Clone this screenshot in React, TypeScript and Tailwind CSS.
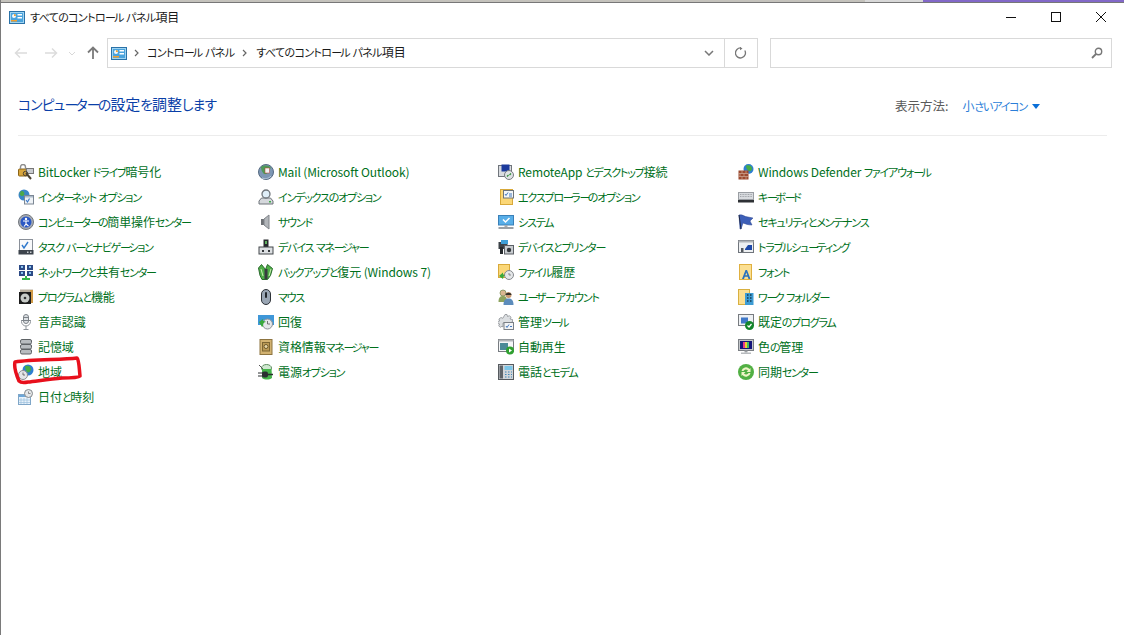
import React from 'react';

const FONT = "font-['Noto_Sans_CJK_JP','Noto_Sans',sans-serif] [font-feature-settings:'palt']";

// The reference font has much narrower kana than kanji, so kana runs get tightened
function Jp({ text, loose = false }: { text: string; loose?: boolean }) {
  const runs = text.match(/[\u3040-\u30fb\u30fd-\u30ff]+|\u30fc+|[^\u3040-\u30ff]+/g) ?? [];
  return (
    <>
      {runs.map((run, i) => {
        if (run[0] === '\u30fc') return <span key={i} className={loose ? 'text-[0.92em] tracking-[-0.18em]' : 'text-[0.92em] tracking-[-0.24em]'}>{run}</span>;
        if (/^[\u3040-\u30ff]/.test(run)) return <span key={i} className={loose ? 'text-[0.92em] tracking-[-0.06em]' : 'text-[0.92em] tracking-[-0.11em]'}>{run}</span>;
        return <span key={i} className="tracking-[-0.01em]">{run}</span>;
      })}
    </>
  );
}

function Svg({ children }: { children: React.ReactNode }) {
  return (
    <svg viewBox="0 0 16 16" className="h-4 w-4 shrink-0">
      {children}
    </svg>
  );
}

// control panel icon used in the title bar and address bar
function PanelIcon() {
  return (
    <svg viewBox="0 0 16 13" className="h-[13px] w-4 shrink-0">
      <rect x="0.5" y="0.5" width="15" height="12" fill="#9fd4f2" stroke="#2a72a8" />
      <rect x="2" y="2" width="12" height="9" fill="#4aa3dc" />
      <circle cx="5" cy="5" r="2" fill="#f4f8fb" />
      <path d="M5 5V3a2 2 0 0 1 2 2z" fill="#f0a030" />
      <rect x="8.5" y="3" width="4.5" height="1.5" fill="#fff" />
      <rect x="8.5" y="6" width="4.5" height="1.5" fill="#fff" />
      <rect x="2" y="9" width="6" height="1.5" fill="#f0a030" />
    </svg>
  );
}

const Clock = ({ x = 10, y = 11, r = 4 }: { x?: number; y?: number; r?: number }) => (
  <g>
    <circle cx={x} cy={y} r={r} fill="#e4e6e8" stroke="#85898d" />
    <path d={`M${x} ${y - 2}v2h2`} fill="none" stroke="#666" strokeWidth="0.7" />
  </g>
);

const icons: Record<string, React.ReactNode> = {
  bitlocker: (
    <>
      <rect x="0.5" y="5" width="9" height="7" rx="1" fill="#d9a63c" stroke="#8a6418" />
      <path d="M2.500 5V3a2.500 2.500 0 0 1 5 0v2" fill="none" stroke="#8d8d8d" strokeWidth="1.400" />
      <rect x="8.500" y="4.500" width="7" height="5" fill="#c9ccd0" stroke="#777" />
      <path d="M8 9l5 6" stroke="#4c4230" strokeWidth="2" />
      <circle cx="7.500" cy="9.500" r="2.200" fill="none" stroke="#4c4230" />
    </>
  ),
  internet: (
    <>
      <circle cx="6" cy="6" r="5.500" fill="#3a86c8" />
      <path d="M3 2c3 0 4 2 3 4S2 7 1.500 5z" fill="#4ca84a" />
      <rect x="6.500" y="6.500" width="9" height="8.500" fill="#eef2f6" stroke="#7c8794" />
      <rect x="7" y="7" width="8" height="1.500" fill="#a9b8c8" />
      <path d="M8 11l1.500 2 2-3.500" fill="none" stroke="#3978c8" strokeWidth="1.100" />
    </>
  ),
  ease: (
    <>
      <circle cx="8" cy="8" r="7.500" fill="#a7acb4" stroke="#70757c" />
      <circle cx="8" cy="8" r="5.500" fill="#2b58c4" />
      <circle cx="8" cy="5" r="1.200" fill="#fff" />
      <path d="M5 7h6M8 7v3l-2 2.500M8 10l2.500 2" stroke="#fff" strokeWidth="1.100" fill="none" />
    </>
  ),
  taskbar: (
    <>
      <rect x="1.500" y="0.500" width="13" height="11" fill="#f8f9fb" stroke="#8a9099" />
      <path d="M4 6l2 3 4-6" fill="none" stroke="#2f78cc" strokeWidth="1.400" />
      <rect x="0.500" y="11" width="15" height="4.500" fill="#3d444c" />
      <rect x="9" y="12.500" width="1.500" height="1.500" fill="#c8ccd0" />
      <rect x="12" y="12.500" width="1.500" height="1.500" fill="#c8ccd0" />
    </>
  ),
  network: (
    <>
      <rect x="1" y="1" width="6" height="5" fill="#2c4a86" />
      <rect x="9" y="1" width="6" height="5" fill="#2c4a86" />
      <rect x="1" y="7" width="6" height="5" fill="#2c4a86" />
      <rect x="9" y="7" width="6" height="5" fill="#2c4a86" />
      <rect x="3" y="2" width="2" height="2" fill="#8ac4ee" />
      <rect x="11" y="2" width="2" height="2" fill="#8ac4ee" />
      <rect x="3" y="8" width="2" height="2" fill="#8ac4ee" />
      <rect x="11" y="8" width="2" height="2" fill="#8ac4ee" />
      <path d="M7 12h2v2h3v2H4v-2h3z" fill="#33b34a" />
    </>
  ),
  programs: (
    <>
      <rect x="2" y="0.500" width="13" height="3" fill="#b9b0a0" />
      <rect x="12" y="1" width="3" height="13" fill="#d09a48" />
      <rect x="1" y="3" width="12" height="12" fill="#1c1c1c" />
      <circle cx="7" cy="9" r="4.500" fill="#c8ccc8" />
      <circle cx="7" cy="9" r="1.300" fill="#333" />
    </>
  ),
  speech: (
    <>
      <rect x="5.500" y="0.500" width="5" height="9" rx="2.500" fill="#dde1e5" stroke="#7c8288" />
      <path d="M4 6.500h8M5.500 3.500h5" stroke="#7c8288" />
      <path d="M3.500 6v1.500a4.500 4.500 0 0 0 9 0V6M8 12v3M5.500 15.500h5" fill="none" stroke="#8f959b" />
    </>
  ),
  storage: (
    <>
      <rect x="2.500" y="0.500" width="11" height="4.500" rx="1.500" fill="#b8bcc0" stroke="#5e6266" />
      <rect x="2.500" y="5.500" width="11" height="4.500" rx="1.500" fill="#b8bcc0" stroke="#5e6266" />
      <rect x="2.500" y="10.500" width="11" height="4.500" rx="1.500" fill="#b8bcc0" stroke="#5e6266" />
    </>
  ),
  region: (
    <>
      <circle cx="10" cy="6" r="5.500" fill="#2f7fd0" />
      <path d="M7 2c3-1 6 0 6 3s-3 4-4 3-2-4-2-6z" fill="#46ad46" />
      <circle cx="5" cy="11" r="4.500" fill="#e4e6e8" stroke="#8a8e92" />
      <path d="M5 8.500V11h2" fill="none" stroke="#555" strokeWidth="0.800" />
    </>
  ),
  datetime: (
    <>
      <rect x="0.500" y="5.500" width="12" height="10" fill="#e8f2fb" stroke="#7fa6c8" />
      <rect x="1" y="6" width="11" height="2" fill="#6ca6d8" />
      <path d="M3 9v6M6 9v6M9 9v6M1 11h11M1 13.500h11" stroke="#9cc0dd" strokeWidth="0.700" />
      <Clock x={10.500} y={4.500} r={4} />
    </>
  ),
  mail: (
    <>
      <circle cx="8" cy="8" r="7.500" fill="#7d97b4" stroke="#566a82" />
      <path d="M3 3c3-2 8-2 10 1-2 1-2 5-5 6S3 6 3 3z" fill="#4f9a58" />
      <rect x="7" y="4" width="4.500" height="5" fill="#f2f4f6" stroke="#c0392b" strokeWidth="0.500" />
      <path d="M4 14c3 1 6 1 9-2" stroke="#b8cadb" fill="none" />
    </>
  ),
  indexing: (
    <>
      <path d="M1 15v-3l2.500-3h9l2.500 3v3z" fill="#d5d8dc" stroke="#6f747a" />
      <rect x="11" y="12" width="2" height="1.500" fill="#3cae48" />
      <circle cx="8" cy="5" r="4" fill="#dfeef8" stroke="#6f747a" strokeWidth="1.300" />
    </>
  ),
  sound: (
    <>
      <rect x="3" y="5" width="3" height="6" fill="#6d7175" />
      <path d="M6 5l5-4v14l-5-4z" fill="#b2b6ba" stroke="#80848a" />
    </>
  ),
  devmgr: (
    <>
      <rect x="5.500" y="0.500" width="5" height="8" fill="#26292c" />
      <rect x="7" y="2" width="2" height="3" fill="#5fb05f" />
      <rect x="1" y="8" width="14" height="7" fill="#dcdfe2" stroke="#44484c" />
      <rect x="4" y="11" width="2" height="2" fill="#33373a" />
      <rect x="10" y="11" width="2" height="2" fill="#33373a" />
    </>
  ),
  backup: (
    <>
      <path d="M0.500 4l3-3.500 4 5 2-5 5 4-2 7-3 4H4l-2-4z" fill="#4fae48" stroke="#2a6a2e" />
      <rect x="6.500" y="5" width="3" height="10" fill="#373b3f" />
      <path d="M3 5l2 7M13 5l-2 7" stroke="#c8eeb0" />
    </>
  ),
  mouse: (
    <>
      <rect x="3.500" y="0.500" width="9" height="15" rx="4.500" fill="#9aa6b4" stroke="#2e3238" />
      <rect x="7" y="3" width="2" height="6" rx="1" fill="#23272c" />
    </>
  ),
  recovery: (
    <>
      <rect x="0" y="1" width="16" height="10" fill="#3f97d8" />
      <circle cx="9.500" cy="10" r="5" fill="#e4e6e8" stroke="#8d9196" />
      <path d="M9.500 7v3h2.500" fill="none" stroke="#555" strokeWidth="0.800" />
      <path d="M1 8l4-3v2c1 0 2 0 3 1-2 0-3 1-3 4l-1 1z" fill="#3aa83c" />
    </>
  ),
  credential: (
    <>
      <rect x="2" y="0.500" width="12" height="15" fill="#d2b271" stroke="#8d7440" />
      <rect x="4.500" y="3.500" width="7" height="8.500" fill="#bb9a56" stroke="#7d6634" />
      <circle cx="8" cy="7.500" r="2" fill="#e8d6a8" stroke="#6d5828" />
    </>
  ),
  power: (
    <>
      <ellipse cx="8.500" cy="4" rx="5" ry="3.500" fill="#cfe8d0" stroke="#5d8d60" />
      <path d="M4 5h9.500l.5 9c-3 2-7 2-10 0z" fill="#46b44a" />
      <path d="M0 9h5M0 12h5" stroke="#2b2e31" />
      <rect x="4" y="7.500" width="6" height="6" rx="2" fill="#2b2e31" />
      <path d="M10 10.500h5" stroke="#2b2e31" strokeWidth="1.500" />
      <path d="M1 1l4 4" stroke="#555" />
    </>
  ),
  remote: (
    <>
      <rect x="0.500" y="1.500" width="13" height="11" fill="#d9dce0" stroke="#70757c" />
      <rect x="3.500" y="0.500" width="8" height="7" fill="#1c3a9c" />
      <circle cx="11" cy="11" r="4.500" fill="#dfe2e5" stroke="#777b80" />
      <path d="M9 12.500l1.500-1.500M11.500 11L13 9.500" stroke="#2e8f36" strokeWidth="1.200" />
    </>
  ),
  explorer: (
    <>
      <rect x="2.500" y="0.500" width="12" height="15" fill="#fbd777" stroke="#d8a93a" />
      <rect x="5.500" y="1.500" width="10" height="7.500" fill="#f4f6f8" stroke="#6f747a" />
      <path d="M7 5l1 1.500 2-3M11 5h3M11 7h3" fill="none" stroke="#4378bf" />
    </>
  ),
  system: (
    <>
      <rect x="0.500" y="1.500" width="15" height="9.500" fill="#58aee8" stroke="#3a80b8" />
      <path d="M5 5.500l2.500 2.500 4-4" fill="none" stroke="#fff" strokeWidth="1.500" />
      <rect x="6.500" y="11" width="3" height="2" fill="#a8acb0" />
      <rect x="0.500" y="13" width="15" height="2" fill="#9aa0a6" />
    </>
  ),
  printers: (
    <>
      <rect x="0.500" y="3" width="9" height="7" fill="#3c4248" />
      <rect x="3" y="1" width="7" height="4" fill="#3f9fd8" />
      <rect x="2" y="8" width="3" height="7" fill="#262a2e" />
      <rect x="6.500" y="6.500" width="9" height="8.500" fill="#c8ccd0" stroke="#5c6066" />
      <circle cx="11" cy="11" r="2.200" fill="#33373b" />
    </>
  ),
  history: (
    <>
      <rect x="0.500" y="0.500" width="11" height="13" fill="#fbd777" stroke="#d8a93a" />
      <Clock x={11} y={11} r={4.500} />
      <path d="M1 12l4-3.500v2c1 0 1.500.5 2 1-1 0-1.500 1-2 3.500z" fill="#3aa83c" />
    </>
  ),
  users: (
    <>
      <circle cx="5" cy="4" r="3" fill="#d9b690" stroke="#7d8f5a" strokeWidth="0.800" />
      <path d="M0.500 13c0-5 2-6 4.500-6s4 1 4 6z" fill="#8da35e" />
      <circle cx="10.500" cy="6" r="3" fill="#c99a72" />
      <path d="M7.500 6c0-3 6-3 6 0z" fill="#33302c" />
      <path d="M5.500 16c0-5 2-6.500 5-6.500s5 1.500 5 6.500z" fill="#5c8cbc" />
    </>
  ),
  admin: (
    <>
      <path d="M7 0.500h2l.5 2 2-.8 1.500 1.500-1 1.800 2.500.5v2.500l-2 .5V9H5v4l-1-.7-1.800 1-1.500-1.500 1-1.800-2-.5V7.500l2-.5-.8-2L3 3.500l1.800.8z" fill="#dcdfe2" stroke="#8d9196" strokeWidth="0.800" />
      <rect x="6" y="8.500" width="9.500" height="7" fill="#f2f4f6" stroke="#7b8086" />
      <path d="M8 12l1 1.500 2-3M12 12.500h2" fill="none" stroke="#4378bf" />
    </>
  ),
  autoplay: (
    <>
      <rect x="0.500" y="0.500" width="15" height="12" fill="#f4f6f8" stroke="#777b80" />
      <rect x="0.500" y="0.500" width="15" height="2" fill="#b0b4b8" />
      <rect x="2" y="4" width="8" height="7" fill="#4a8a98" />
      <circle cx="12" cy="11.500" r="4" fill="#2fa030" />
      <path d="M11 9.500v4l3-2z" fill="#fff" />
    </>
  ),
  phone: (
    <>
      <rect x="0.500" y="0.500" width="15" height="15" fill="#d2d5d8" stroke="#565a5f" />
      <rect x="1.500" y="1.500" width="3.500" height="13" fill="#5e6368" />
      <rect x="6.500" y="2" width="8" height="4" fill="#7cc6e8" />
      <path d="M7 8h1.500M10 8h1.500M13 8h1M7 10.500h1.500M10 10.500h1.500M13 10.500h1M7 13h1.500M10 13h1.500M13 13h1" stroke="#3f87b8" />
    </>
  ),
  firewall: (
    <>
      <circle cx="10.500" cy="5" r="5" fill="#2f7fd0" />
      <path d="M8 1.500c3-1 6 0 6 3s-3 3-4 2-2-3-2-5z" fill="#46ad46" />
      <rect x="0.500" y="6.500" width="10" height="9" fill="#9c4a30" />
      <path d="M0.500 9.500h10M0.500 12.500h10M4 6.500v3M8 6.500v3M2 9.500v3M6 9.500v3M4 12.500v3M8 12.500v3" stroke="#d8b8a8" strokeWidth="0.600" />
    </>
  ),
  keyboard: (
    <>
      <rect x="0.500" y="3.500" width="15" height="7" fill="#d8dbdf" stroke="#9a9ea3" />
      <path d="M2 5.500h12M2 7.500h12" stroke="#a2a6ab" strokeDasharray="1 0.600" />
      <rect x="0" y="11" width="16" height="2.500" fill="#2e3135" />
    </>
  ),
  security: (
    <>
      <path d="M1 1c4-1 5 2 9 2l5 1-3 3 2 4c-4 0-6-1-9-2L3 15H2z" fill="#3d5fb8" stroke="#2a438a" strokeWidth="0.500" />
      <path d="M1 1l2 14" stroke="#1f2a4a" />
    </>
  ),
  trouble: (
    <>
      <rect x="0.500" y="1.500" width="15" height="12" fill="#eef0f2" stroke="#70757c" />
      <rect x="0.500" y="1.500" width="15" height="2" fill="#b0b4b8" />
      <path d="M7 10l3-4h4v5H7z" fill="#1f49a8" />
      <rect x="3" y="9" width="2.500" height="4" fill="#555a60" />
    </>
  ),
  fonts: (
    <>
      <rect x="1.500" y="0.500" width="12" height="15" fill="#fbdf92" stroke="#e0b040" />
      <path d="M4 15l3.500-9h1.500l3.500 9h-2l-.8-2.200H6.800L6 15zM7.300 11.200h2l-1-2.700z" fill="#2b72bd" />
    </>
  ),
  work: (
    <>
      <rect x="0.500" y="0.500" width="11" height="15" fill="#fbdf92" stroke="#d8b040" />
      <rect x="7" y="4" width="8.500" height="12" fill="#3d9cd4" />
      <path d="M9 6h1.500M12 6h1.500M9 9h1.500M12 9h1.500M9 12h1.500M12 12h1.500" stroke="#12384f" strokeWidth="1.500" />
    </>
  ),
  defaults: (
    <>
      <rect x="0.500" y="0.500" width="15" height="11" fill="#eef1f4" stroke="#777b80" />
      <rect x="3" y="3.500" width="7" height="6" fill="#3f78c8" />
      <circle cx="11.500" cy="11.500" r="4.500" fill="#12852a" />
      <path d="M9.500 11.500l1.500 1.500 2.500-3" fill="none" stroke="#fff" strokeWidth="1.200" />
    </>
  ),
  color: (
    <>
      <rect x="0.500" y="0.500" width="15" height="11" fill="#c4c7ca" stroke="#7b7f84" />
      <rect x="2" y="2" width="12" height="8" fill="#15157a" />
      <rect x="5" y="3" width="2" height="6" fill="#e83a8c" />
      <rect x="7" y="3" width="2" height="6" fill="#f0d030" />
      <rect x="9" y="3" width="2" height="6" fill="#40c060" />
      <rect x="6.500" y="11.500" width="3" height="2" fill="#9a9ea2" />
      <rect x="3" y="13.500" width="10" height="1.500" fill="#b8bbbe" />
    </>
  ),
  sync: (
    <>
      <circle cx="8" cy="8" r="8" fill="#52b044" />
      <path d="M3.500 7a4.500 4.500 0 0 1 8-2l1-1v4H8.500l1.500-1.500A2.800 2.800 0 0 0 5.500 7z" fill="#f0f5c8" />
      <path d="M12.500 9a4.500 4.500 0 0 1-8 2l-1 1V8h4L6 9.500A2.800 2.800 0 0 0 10.500 9z" fill="#f0f5c8" />
    </>
  ),
};

const columns: [string, string][][] = [
  [
    ['bitlocker', 'BitLocker ドライブ暗号化'],
    ['internet', 'インターネット オプション'],
    ['ease', 'コンピューターの簡単操作センター'],
    ['taskbar', 'タスク バーとナビゲーション'],
    ['network', 'ネットワークと共有センター'],
    ['programs', 'プログラムと機能'],
    ['speech', '音声認識'],
    ['storage', '記憶域'],
    ['region', '地域'],
    ['datetime', '日付と時刻'],
  ],
  [
    ['mail', 'Mail (Microsoft Outlook)'],
    ['indexing', 'インデックスのオプション'],
    ['sound', 'サウンド'],
    ['devmgr', 'デバイス マネージャー'],
    ['backup', 'バックアップと復元 (Windows 7)'],
    ['mouse', 'マウス'],
    ['recovery', '回復'],
    ['credential', '資格情報マネージャー'],
    ['power', '電源オプション'],
  ],
  [
    ['remote', 'RemoteApp とデスクトップ接続'],
    ['explorer', 'エクスプローラーのオプション'],
    ['system', 'システム'],
    ['printers', 'デバイスとプリンター'],
    ['history', 'ファイル履歴'],
    ['users', 'ユーザー アカウント'],
    ['admin', '管理ツール'],
    ['autoplay', '自動再生'],
    ['phone', '電話とモデム'],
  ],
  [
    ['firewall', 'Windows Defender ファイアウォール'],
    ['keyboard', 'キーボード'],
    ['security', 'セキュリティとメンテナンス'],
    ['trouble', 'トラブルシューティング'],
    ['fonts', 'フォント'],
    ['work', 'ワーク フォルダー'],
    ['defaults', '既定のプログラム'],
    ['color', '色の管理'],
    ['sync', '同期センター'],
  ],
];

function Item({ icon, label }: { icon: string; label: string }) {
  return (
    <div className="relative flex h-[25px] items-center gap-1">
      <Svg>{icons[icon]}</Svg>
      <span className="whitespace-nowrap text-[12px] text-[#00701c]"><Jp text={label} /></span>
      {icon === 'region' && (
        <svg viewBox="0 0 72 30" className="absolute -left-[6px] top-[-3px] h-[30px] w-[72px]" fill="none">
          <path
            d="M3 6C20 3 50 4 65 2c2 2 2 8 3 18-1 1-6 2-18 2-12 1-25 3-34 4-5 1-8 0-9-1C4 18 2 10 3 6z"
            stroke="#e8101c"
            strokeWidth="3.500"
            strokeLinejoin="round"
          />
        </svg>
      )}
    </div>
  );
}

export default function App() {
  return (
    <div className={`${FONT} flex h-[635px] w-[1124px] flex-col overflow-hidden border-l border-[#7a7a7a] bg-white text-[#1a1a1a]`}>
      {/* bit of the desktop behind the window */}
      <div className="flex h-[3px] shrink-0 border-b border-[#777]">
        <div className="w-[864px] bg-[#c4c2bc]" />
        <div className="w-[58px] bg-[#d8d8d8]" />
        <div className="flex-1 bg-[#8268c8]" />
      </div>

      {/* title bar */}
      <div className="flex h-[28px] shrink-0 items-center pl-2">
        <PanelIcon />
        <span className="ml-[5px] text-[12px]"><Jp text="すべてのコントロール パネル項目" loose /></span>
        <div className="ml-auto flex items-center gap-[35px] pr-[18px]">
          <svg viewBox="0 0 10 10" className="h-[10px] w-[10px]"><path d="M0 5.500h10" stroke="#111" /></svg>
          <svg viewBox="0 0 10 10" className="h-[10px] w-[10px]"><rect x="0.500" y="0.500" width="9" height="9" fill="none" stroke="#111" /></svg>
          <svg viewBox="0 0 10 10" className="h-[10px] w-[10px]"><path d="M0 0l10 10M10 0L0 10" stroke="#111" /></svg>
        </div>
      </div>

      {/* address row */}
      <div className="mt-[7px] flex h-[30px] shrink-0 items-center pr-3">
        <div className="flex w-[106px] items-center pl-[13px]">
          <svg viewBox="0 0 14 12" className="h-3 w-[14px]"><path d="M13 6H2M6 1.500L1.500 6 6 10.500" fill="none" stroke="#dcdcdc" strokeWidth="1.500" /></svg>
          <svg viewBox="0 0 14 12" className="ml-4 h-3 w-[14px]"><path d="M1 6h11M8 1.500L12.500 6 8 10.500" fill="none" stroke="#dcdcdc" strokeWidth="1.500" /></svg>
          <svg viewBox="0 0 8 5" className="ml-[10px] h-[5px] w-2"><path d="M1 1l3 3 3-3" fill="none" stroke="#d8d8d8" /></svg>
          <svg viewBox="0 0 12 14" className="ml-[11px] h-[14px] w-3"><path d="M6 13V2M1 6.500L6 1.500l5 5" fill="none" stroke="#7a7a7a" strokeWidth="1.800" /></svg>
        </div>
        <div className="flex h-[30px] w-[651px] items-center border border-[#d9d9d9] pl-[3px]">
          <PanelIcon />
          <svg viewBox="0 0 5 8" className="ml-[7px] h-2 w-[5px]"><path d="M1 1l3 3-3 3" fill="none" stroke="#666" strokeWidth="1.200" /></svg>
          <span className="ml-[8px] -translate-y-px text-[12px]"><Jp text="コントロール パネル" loose /></span>
          <svg viewBox="0 0 5 8" className="ml-[8px] h-2 w-[5px]"><path d="M1 1l3 3-3 3" fill="none" stroke="#666" strokeWidth="1.200" /></svg>
          <span className="ml-[9px] -translate-y-px text-[12px]"><Jp text="すべてのコントロール パネル項目" loose /></span>
          <div className="ml-auto flex h-full items-center">
            <svg viewBox="0 0 10 6" className="mr-[10px] h-[6px] w-[10px]"><path d="M1 1l4 4 4-4" fill="none" stroke="#777" strokeWidth="1.500" /></svg>
            <div className="flex h-full w-[33px] items-center justify-center border-l border-[#d9d9d9]">
              <svg viewBox="0 0 12 12" className="h-3 w-3" fill="none"><path d="M9.800 3.500A5 5 0 1 1 6 1" stroke="#777" strokeWidth="1.300" /><path d="M5 0v3.200L7.500 1.500z" fill="#777" /></svg>
            </div>
          </div>
        </div>
        <div className="ml-3 flex h-[30px] flex-1 items-center justify-end border border-[#d9d9d9] pr-[8px]">
          <svg viewBox="0 0 12 12" className="h-3 w-3" fill="none"><circle cx="7.500" cy="4.500" r="3.200" stroke="#777" strokeWidth="1.400" /><path d="M5 7l-4 4" stroke="#777" strokeWidth="1.800" /></svg>
        </div>
      </div>

      {/* header */}
      <div className="mx-[17px] mt-[24px] flex h-[44px] shrink-0 items-start justify-between border-b border-[#ececec] pr-[67px]">
        <h1 className="text-[15px] leading-[24px] font-normal text-[#0a3fa8]"><Jp text="コンピューターの設定を調整します" loose /></h1>
        <div className="mt-[4px] flex items-center text-[12px] leading-[20px]">
          <span className="text-[12.500px] text-[#5a5a5a]">表示方法:</span>
          <span className="ml-[14px] text-[#2b7ed8]"><Jp text="小さいアイコン" /></span>
          <svg viewBox="0 0 8 5" className="ml-[5px] h-[5px] w-2"><path d="M0 0h8L4 5z" fill="#0a6fd8" /></svg>
        </div>
      </div>

      {/* item grid */}
      <div className="mt-[23px] ml-[17px] flex">
        {columns.map((items, i) => (
          <div key={i} className="flex w-[240px] flex-col">
            {items.map(([icon, label]) => (
              <Item key={label} icon={icon} label={label} />
            ))}
          </div>
        ))}
      </div>
    </div>
  );
}
